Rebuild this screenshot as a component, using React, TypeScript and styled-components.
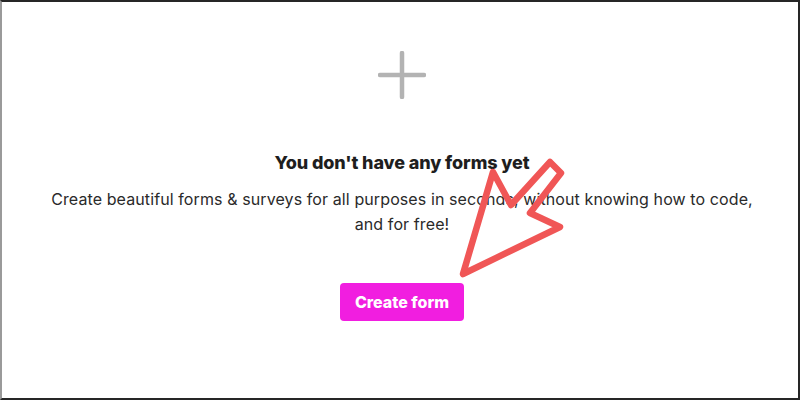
import React from "react";
import styled, { createGlobalStyle } from "styled-components";

const Global = createGlobalStyle`
  html, body { margin: 0; padding: 0; background: #fff; }
  body { font-family: Inter, "Noto Sans", sans-serif; }
  * { box-sizing: border-box; }
`;

const Frame = styled.div`
  position: relative;
  width: 800px;
  height: 400px;
  background: #fff;
  border-top: 2px solid #262626;
  border-right: 2px solid #262626;
  border-bottom: 2px solid #262626;
  border-left: 2px solid #9a9a9a;
  display: flex;
  flex-direction: column;
  align-items: center;
  padding-top: 49px;
  padding-left: 4px;
  overflow: hidden;
`;

const PlusIcon = styled.svg`
  width: 48px;
  height: 48px;
  display: block;
`;

const Title = styled.h2`
  margin: 53px 0 0;
  font-size: 18px;
  line-height: 22px;
  font-weight: 800;
  color: #1e1e1e;
  letter-spacing: -0.1px;
`;

const Description = styled.p`
  margin: 13px 0 0;
  font-size: 16px;
  line-height: 25px;
  font-weight: 400;
  color: #2a2a2a;
  text-align: center;
  letter-spacing: 0.1px;
`;

const CreateButton = styled.button`
  margin-top: 46px;
  width: 124px;
  height: 38px;
  border: none;
  border-radius: 4px;
  background: #f11ee0;
  color: #fff;
  font-family: Inter, "Noto Sans", sans-serif;
  font-size: 16px;
  font-weight: 800;
  cursor: pointer;
`;

const ArrowOverlay = styled.svg`
  position: absolute;
  left: 0;
  top: 0;
  width: 800px;
  height: 400px;
  pointer-events: none;
`;

export default function App() {
  return (
    <>
      <Global />
      <Frame>
        <PlusIcon viewBox="0 0 48 48">
          <path
            d="M24 2 V46 M2 24 H46"
            stroke="#b3b3b3"
            strokeWidth="4.5"
            strokeLinecap="round"
            fill="none"
          />
        </PlusIcon>
        <Title>You don't have any forms yet</Title>
        <Description>
          Create beautiful forms &amp; surveys for all purposes in seconds, without knowing how to code,
          <br />
          and for free!
        </Description>
        <CreateButton>Create form</CreateButton>
        <ArrowOverlay viewBox="0 0 800 400">
          <polygon
            points="461,272 491,170 509,203 548,160 559,171 528,211 558,225"
            fill="none"
            stroke="#f05656"
            strokeWidth="6.5"
            strokeLinejoin="round"
          />
        </ArrowOverlay>
      </Frame>
    </>
  );
}
